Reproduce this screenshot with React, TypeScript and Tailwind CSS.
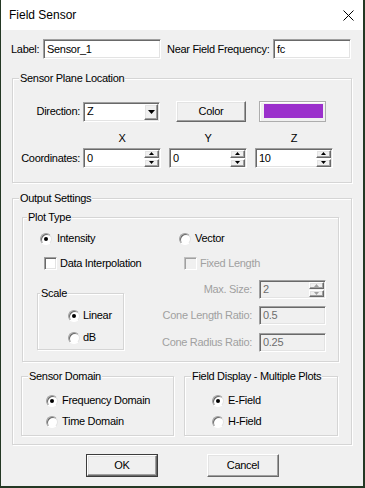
import React from "react";

const sunken =
  "border border-t-[#a0a0a0] border-l-[#a0a0a0] border-b-white border-r-white shadow-[inset_1px_1px_0_#696969,inset_-1px_-1px_0_#e3e3e3]";
const raised =
  "border border-t-white border-l-white border-b-[#696969] border-r-[#696969] shadow-[inset_-1px_-1px_0_#a0a0a0,inset_1px_1px_0_#e3e3e3] bg-[#f0f0f0]";

function Radio({ checked }: { checked?: boolean }) {
  return (
    <span className="w-[12px] h-[12px] shrink-0 rounded-full bg-white border border-t-[#a0a0a0] border-l-[#a0a0a0] border-b-white border-r-[#e3e3e3] shadow-[inset_1px_1px_0_#696969] flex items-center justify-center">
      {checked && <span className="w-[4px] h-[4px] rounded-full bg-black" />}
    </span>
  );
}

function Check({ disabled }: { disabled?: boolean }) {
  return (
    <span
      className={
        disabled
          ? "w-[13px] h-[13px] shrink-0 bg-[#f0f0f0] border border-t-[#c0c0c0] border-l-[#c0c0c0] border-b-white border-r-white shadow-[inset_1px_1px_0_#a0a0a0]"
          : "w-[13px] h-[13px] shrink-0 bg-white border border-t-[#a0a0a0] border-l-[#a0a0a0] border-b-white border-r-white shadow-[inset_1px_1px_0_#696969,inset_-1px_-1px_0_#e3e3e3]"
      }
    />
  );
}

function Arrow({ up, disabled }: { up?: boolean; disabled?: boolean }) {
  return (
    <svg width="5" height="3" viewBox="0 0 5 3">
      <polygon
        points={up ? "0,3 5,3 2.5,0" : "0,0 5,0 2.5,3"}
        fill={disabled ? "#a0a0a0" : "#000"}
      />
    </svg>
  );
}

function SpinBtns({ disabled }: { disabled?: boolean }) {
  return (
    <div className="ml-auto mr-[1px] flex flex-col gap-[1px]">
      <div className={`${raised} w-[15px] h-[8px] flex items-center justify-center`}>
        <Arrow up disabled={disabled} />
      </div>
      <div className={`${raised} w-[15px] h-[8px] flex items-center justify-center`}>
        <Arrow disabled={disabled} />
      </div>
    </div>
  );
}

function Spin({ value }: { value: string }) {
  return (
    <div className={`${sunken} bg-white w-[78px] h-[20px] flex items-center pl-[3px]`}>
      <span>{value}</span>
      <SpinBtns />
    </div>
  );
}

function Legend({ children, className }: { children: React.ReactNode; className: string }) {
  return <legend className={`${className} px-[1px] bg-[#f0f0f0] leading-[13px] whitespace-nowrap`}>{children}</legend>;
}

const groupCls =
  "border border-[#d5d5d5] shadow-[inset_1px_1px_0_#ffffff,1px_1px_0_#ffffff]";

export default function App() {
  return (
    <div className="w-[365px] h-[488px] bg-[#243824] overflow-hidden font-['Liberation_Sans',Arial,sans-serif] text-black">
      <div className="ml-[1px] w-[362px] h-[486px] bg-[#f0f0f0] flex flex-col text-[11px] leading-[13px] tracking-[-0.3px] whitespace-nowrap">
        {/* Title bar */}
        <div className="h-[30px] bg-white flex items-center pl-[8px] shrink-0 tracking-normal">
          <span className="text-[12px]">Field Sensor</span>
          <svg className="ml-auto mr-[9px]" width="11" height="11" viewBox="0 0 11 11">
            <path d="M0.5 0.5 L10.5 10.5 M10.5 0.5 L0.5 10.5" stroke="#000" strokeWidth="1" />
          </svg>
        </div>

        {/* Label row */}
        <div className="mt-[9px] h-[20px] flex items-center pl-[10px]">
          <span className="w-[32px]">Label:</span>
          <div className={`${sunken} bg-white w-[118px] h-[20px] flex items-center pl-[3px]`}>Sensor_1</div>
          <span className="ml-[6px] w-[106px]">Near Field Frequency:</span>
          <div className={`${sunken} bg-white w-[78px] h-[20px] flex items-center pl-[3px]`}>fc</div>
        </div>

        {/* Sensor Plane Location */}
        <fieldset className={`${groupCls} ml-[11px] w-[340px] mt-[13px] pb-[14px]`}>
          <Legend className="ml-[6px]">Sensor Plane Location</Legend>
          <div className="mt-[16px] h-[21px] flex items-center">
            <span className="w-[67px] text-right">Direction:</span>
            <div className={`${sunken} bg-white ml-[3px] w-[77px] h-[20px] flex items-center pl-[3px]`}>
              <span>Z</span>
              <div className={`${raised} ml-auto mr-[1px] w-[14px] h-[16px] flex items-center justify-center`}>
                <svg width="7" height="4" viewBox="0 0 7 4">
                  <polygon points="0,0 7,0 3.5,4" fill="#000" />
                </svg>
              </div>
            </div>
            <div className={`${raised} ml-[16px] w-[70px] h-[21px] flex items-center justify-center`}>Color</div>
            <div className="ml-[13px] w-[67px] h-[21px] border border-[#adadad] bg-[#f0f0f0] pl-[4px] pr-[2px] pt-[2px] pb-[3px] shadow-[inset_1px_1px_0_#ffffff]">
              <div className="w-full h-full bg-[#9b30cc]" />
            </div>
          </div>
          <div className="mt-[10px] h-[13px] flex pl-[70px] gap-[8px]">
            <span className="w-[78px] text-center">X</span>
            <span className="w-[78px] text-center">Y</span>
            <span className="w-[78px] text-center">Z</span>
          </div>
          <div className="mt-[3px] h-[20px] flex items-center">
            <span className="w-[67px] text-right">Coordinates:</span>
            <div className="ml-[3px] flex gap-[8px]">
              <Spin value="0" />
              <Spin value="0" />
              <Spin value="10" />
            </div>
          </div>
        </fieldset>

        {/* Output Settings */}
        <fieldset className={`${groupCls} ml-[11px] w-[340px] mt-[9px] pb-[8px]`}>
          <Legend className="ml-[6px]">Output Settings</Legend>

          <fieldset className={`${groupCls} ml-[9px] w-[317px] mt-[6px] pb-[9px]`}>
            <Legend className="ml-[4px]">Plot Type</Legend>
            <div className="mt-[8px] h-[13px] flex items-center">
              <div className="ml-[17px] w-[139px] flex items-center">
                <Radio checked />
                <span className="ml-[5px]">Intensity</span>
              </div>
              <Radio />
              <span className="ml-[4px]">Vector</span>
            </div>
            <div className="mt-[12px] h-[13px] flex items-center">
              <div className="ml-[21px] w-[140px] flex items-center">
                <Check />
                <span className="ml-[3px]">Data Interpolation</span>
              </div>
              <Check disabled />
              <span className="ml-[3px] text-[#a0a0a0]">Fixed Length</span>
            </div>

            <div className="mt-[10px] flex">
              <fieldset className={`${groupCls} ml-[14px] w-[87px] mt-[7px] pb-[5px] self-start`}>
                <Legend className="ml-[2px]">Scale</Legend>
                <div className="mt-[9px] h-[13px] flex items-center pl-[30px]">
                  <Radio checked />
                  <span className="ml-[3px]">Linear</span>
                </div>
                <div className="mt-[9px] h-[13px] flex items-center pl-[30px]">
                  <Radio />
                  <span className="ml-[3px]">dB</span>
                </div>
              </fieldset>

              <div className="flex flex-col text-[#a0a0a0]">
                <div className="h-[19px] flex items-center">
                  <span className="w-[128px] text-right">Max. Size:</span>
                  <div className={`${sunken} ml-[7px] bg-[#f0f0f0] w-[67px] h-[19px] flex items-center pl-[3px] text-[#6d6d6d]`}>
                    <span>2</span>
                    <div className="ml-auto mr-[1px] flex flex-col gap-[1px]">
                      <div className={`${raised} w-[15px] h-[7px] flex items-center justify-center`}>
                        <Arrow up disabled />
                      </div>
                      <div className={`${raised} w-[15px] h-[7px] flex items-center justify-center`}>
                        <Arrow disabled />
                      </div>
                    </div>
                  </div>
                </div>
                <div className="mt-[7px] h-[19px] flex items-center">
                  <span className="w-[128px] text-right">Cone Length Ratio:</span>
                  <div className={`${sunken} ml-[7px] bg-[#f0f0f0] w-[67px] h-[19px] flex items-center pl-[3px] text-[#6d6d6d]`}>0.5</div>
                </div>
                <div className="mt-[8px] h-[19px] flex items-center">
                  <span className="w-[128px] text-right">Cone Radius Ratio:</span>
                  <div className={`${sunken} ml-[7px] bg-[#f0f0f0] w-[67px] h-[19px] flex items-center pl-[3px] text-[#6d6d6d]`}>0.25</div>
                </div>
              </div>
            </div>
          </fieldset>

          <div className="flex mt-[8px]">
            <fieldset className={`${groupCls} ml-[8px] w-[153px] pb-[7px]`}>
              <Legend className="ml-[6px]">Sensor Domain</Legend>
              <div className="mt-[11px] h-[13px] flex items-center pl-[24px]">
                <Radio checked />
                <span className="ml-[4px]">Frequency Domain</span>
              </div>
              <div className="mt-[8px] h-[13px] flex items-center pl-[24px]">
                <Radio />
                <span className="ml-[4px]">Time Domain</span>
              </div>
            </fieldset>
            <fieldset className={`${groupCls} ml-[10px] w-[154px] pb-[7px]`}>
              <Legend className="ml-[6px]">Field Display - Multiple Plots</Legend>
              <div className="mt-[11px] h-[13px] flex items-center pl-[27px]">
                <Radio checked />
                <span className="ml-[4px]">E-Field</span>
              </div>
              <div className="mt-[8px] h-[13px] flex items-center pl-[27px]">
                <Radio />
                <span className="ml-[4px]">H-Field</span>
              </div>
            </fieldset>
          </div>
        </fieldset>

        {/* Buttons */}
        <div className="mt-[9px] flex">
          <div className="ml-[85px] w-[72px] h-[23px] border border-[#3c3c3c] flex">
            <div className={`${raised} flex-1 flex items-center justify-center`}>OK</div>
          </div>
          <div className={`${raised} ml-[49px] w-[72px] h-[23px] flex items-center justify-center`}>Cancel</div>
        </div>
      </div>
    </div>
  );
}
